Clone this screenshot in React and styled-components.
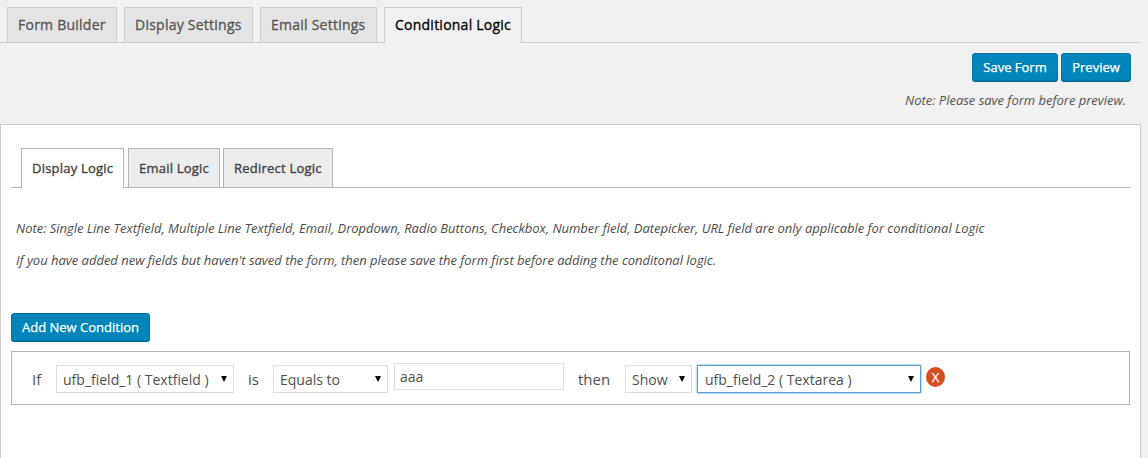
import React from "react";
import styled, { createGlobalStyle } from "styled-components";

const GlobalStyle = createGlobalStyle`
  * { box-sizing: border-box; }
  body {
    margin: 0;
    background: #f0f0f0;
    font-family: "Open Sans", "Noto Sans", sans-serif;
    overflow: hidden;
  }
`;

const Page = styled.div`
  display: flex;
  flex-direction: column;
  width: 1141px;
  height: 458px;
`;

const MainTabs = styled.nav`
  display: flex;
  gap: 7px;
  height: 43px;
  padding: 7px 0 0 7px;
  border-bottom: 1px solid #ccc;
`;

const MainTab = styled.a`
  width: ${(p) => p.$width}px;
  height: ${(p) => (p.$active ? 36 : 35)}px;
  padding-left: 10px;
  border: 1px solid #ccc;
  border-bottom: 0;
  background: ${(p) => (p.$active ? "#f0f0f0" : "#e4e4e4")};
  color: ${(p) => (p.$active ? "#000" : "#555")};
  font-size: 14px;
  font-weight: 500;
  -webkit-text-stroke: 0.3px currentColor;
  line-height: 34px;
  letter-spacing: 0.24px;
  white-space: nowrap;
`;

const Actions = styled.div`
  display: flex;
  justify-content: flex-end;
  gap: 3px;
  padding: 10px 10px 0 0;
`;

const Button = styled.button`
  width: ${(p) => p.$width}px;
  height: 28px;
  padding: 0;
  border: 1px solid #0074a2;
  border-radius: 3px;
  background: #0085ba;
  box-shadow: 0 1px 0 #006799;
  color: #fff;
  font: 500 13px/26px "Open Sans", sans-serif;
  -webkit-text-stroke: 0.25px currentColor;
  white-space: nowrap;
`;

const SaveNote = styled.p`
  margin: 9px 15px 0 0;
  height: 34px;
  color: #555;
  font-size: 13px;
  font-style: italic;
  line-height: 20px;
  letter-spacing: -0.018px;
  text-align: right;
`;

const Panel = styled.main`
  flex: 1;
  padding: 23px 10px 0;
  border: 1px solid #ccc;
  border-bottom: 0;
  background: #fff;
`;

const LogicTabs = styled.nav`
  display: flex;
  height: 40px;
  padding-left: 10px;
  border-bottom: 1px solid #b4b4b4;
`;

const LogicTab = styled.a`
  width: ${(p) => p.$width}px;
  height: ${(p) => (p.$active ? 40 : 39)}px;
  margin-right: ${(p) => p.$gap || 0}px;
  padding-left: 10px;
  border: 1px solid #b4b4b4;
  border-bottom: 0;
  background: ${(p) => (p.$active ? "#fff" : "#ececec")};
  color: #444;
  font-size: 13px;
  font-weight: 500;
  -webkit-text-stroke: 0.35px currentColor;
  line-height: 39px;
  letter-spacing: 0.22px;
  white-space: nowrap;
`;

const Notes = styled.div`
  display: flex;
  flex-direction: column;
  gap: 12px;
  height: 125px;
  padding: 30px 0 0 5px;
`;

const Note = styled.p`
  margin: 0;
  color: #4c4c4c;
  font-size: 13px;
  font-style: italic;
  line-height: 20px;
  letter-spacing: -0.018px;
  white-space: nowrap;
`;

const Condition = styled.section`
  display: flex;
  align-items: flex-start;
  height: 54px;
  margin-top: 10px;
  padding: 11px 0 0 20px;
  border: 1px solid #b4b4b4;
  color: #505050;
  font-size: 14px;
`;

const Word = styled.span`
  width: ${(p) => p.$width}px;
  padding-left: ${(p) => p.$indent || 0}px;
  padding-top: 5px;
  font-size: 15px;
  line-height: 22px;
`;

const SelectBox = styled.div`
  display: flex;
  align-items: center;
  justify-content: space-between;
  width: ${(p) => p.$width}px;
  height: 28px;
  margin-top: 2px;
  margin-right: ${(p) => p.$gap || 0}px;
  padding: 0 6px;
  border: 1px solid ${(p) => (p.$focused ? "#5b9dd9" : "#ddd")};
  box-shadow: ${(p) => (p.$focused ? "0 0 2px rgba(30, 140, 190, 0.8)" : "none")};
  background: #fff;
  line-height: 20px;
  white-space: nowrap;
  & > span {
    padding-top: 2px;
    padding-left: ${(p) => (p.$focused ? 1 : 0)}px;
  }
`;

const Arrow = styled.i`
  width: 0;
  height: 0;
  border: 3.5px solid transparent;
  border-top: 6px solid #000;
  border-bottom: 0;
`;

const Field = styled.input`
  width: 170px;
  height: 27px;
  padding: 0 5px 1px;
  border: 1px solid #ddd;
  outline: 0;
  background: #fff;
  color: #505050;
  font: 14px "Open Sans", sans-serif;
`;

const Remove = styled.button`
  width: 19px;
  height: 20px;
  margin-top: 4px;
  padding: 0;
  border: 0;
  border-radius: 50%;
  background: #d54e21;
  color: #fff;
  font: 500 13px/19px "Open Sans", sans-serif;
  -webkit-text-stroke: 0.25px currentColor;
`;

function Select({ children, ...props }) {
  return (
    <SelectBox {...props}>
      <span>{children}</span>
      <Arrow />
    </SelectBox>
  );
}

export default function App() {
  return (
    <Page>
      <GlobalStyle />
      <MainTabs>
        <MainTab $width={110}>Form Builder</MainTab>
        <MainTab $width={129}>Display Settings</MainTab>
        <MainTab $width={117}>Email Settings</MainTab>
        <MainTab $width={138} $active>Conditional Logic</MainTab>
      </MainTabs>
      <Actions>
        <Button $width={86}>Save Form</Button>
        <Button $width={70}>Preview</Button>
      </Actions>
      <SaveNote>Note: Please save form before preview.</SaveNote>
      <Panel>
        <LogicTabs>
          <LogicTab $width={103} $gap={4} $active>Display Logic</LogicTab>
          <LogicTab $width={92} $gap={3}>Email Logic</LogicTab>
          <LogicTab $width={110}>Redirect Logic</LogicTab>
        </LogicTabs>
        <Notes>
          <Note>
            Note: Single Line Textfield, Multiple Line Textfield, Email, Dropdown, Radio Buttons, Checkbox, Number field, Datepicker, URL field are only applicable for conditional Logic
          </Note>
          <Note>
            If you have added new fields but haven't saved the form, then please save the form first before adding the conditonal logic.
          </Note>
        </Notes>
        <Button $width={139}>Add New Condition</Button>
        <Condition>
          <Word $width={24}>If</Word>
          <Select $width={178}>ufb_field_1 ( Textfield )</Select>
          <Word $width={39} $indent={14}>is</Word>
          <Select $width={115} $gap={6}>Equals to</Select>
          <Field defaultValue="aaa" aria-label="Value" />
          <Word $width={61} $indent={14}>then</Word>
          <Select $width={67} $gap={5}>Show</Select>
          <Select $width={224} $gap={5} $focused>ufb_field_2 ( Textarea )</Select>
          <Remove aria-label="Remove condition">X</Remove>
        </Condition>
      </Panel>
    </Page>
  );
}
